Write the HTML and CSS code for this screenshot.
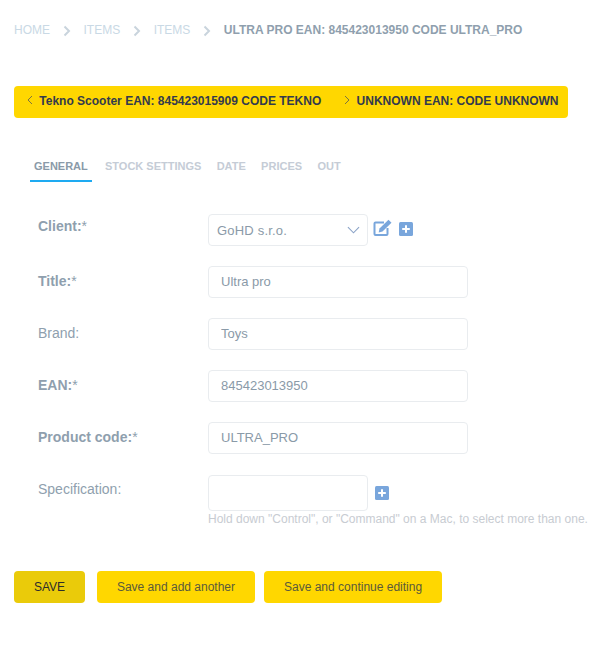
FILE: index.html
```html
<!DOCTYPE html>
<html lang="en">
<head>
    <meta charset="UTF-8">
    <meta name="viewport" content="width=device-width, initial-scale=1.0">
    <title>Ultra pro</title>
    <link rel="stylesheet" href="styles.css">
</head>
<body>
    <div class="breadcrumbs">
        <a href="#">Home</a>
        <svg class="crumb-sep" viewBox="0 0 8 12"><path d="M1.500 1.500 6 6l-4.500 4.500"/></svg>
        <a href="#">Items</a>
        <svg class="crumb-sep" viewBox="0 0 8 12"><path d="M1.500 1.500 6 6l-4.500 4.500"/></svg>
        <a href="#">Items</a>
        <svg class="crumb-sep" viewBox="0 0 8 12"><path d="M1.500 1.500 6 6l-4.500 4.500"/></svg>
        <span class="current">Ultra pro EAN: 845423013950 CODE ULTRA_PRO</span>
    </div>

    <div class="pager">
        <a href="#" class="pager-prev">
            <svg class="pager-arrow" viewBox="0 0 6 10"><path d="M5 1 1 5l4 4"/></svg>
            Tekno Scooter EAN: 845423015909 CODE TEKNO
        </a>
        <a href="#" class="pager-next">
            <svg class="pager-arrow" viewBox="0 0 6 10"><path d="M1 1l4 4-4 4"/></svg>
            UNKNOWN EAN: CODE UNKNOWN
        </a>
    </div>

    <ul class="tabs">
        <li class="tab active">General</li>
        <li class="tab">Stock settings</li>
        <li class="tab">Date</li>
        <li class="tab">Prices</li>
        <li class="tab">Out</li>
    </ul>

    <form class="form">
        <div class="row row-client">
            <label class="required">Client:<span>*</span></label>
            <div class="select-box">
                <span>GoHD s.r.o.</span>
                <svg class="select-arrow" viewBox="0 0 14 8"><path d="M1 1l6 6 6-6"/></svg>
            </div>
            <svg class="icon-edit" viewBox="0 0 20 18">
                <path class="edit-box" d="M11 3.500H2.500a1 1 0 0 0-1 1v10.500a1 1 0 0 0 1 1h11a1 1 0 0 0 1-1V9"/>
                <path class="edit-pen" d="M6.500 9.500 15.500 .8l3 2.900-9 8.800-3.800 .9z"/>
            </svg>
            <svg class="icon-add" viewBox="0 0 14 14">
                <rect width="14" height="14" rx="1.500"/>
                <path d="M7 3.200v7.600M3.200 7h7.600"/>
            </svg>
        </div>
        <div class="row">
            <label class="required">Title:<span>*</span></label>
            <input class="field" type="text" value="Ultra pro">
        </div>
        <div class="row">
            <label>Brand:</label>
            <input class="field" type="text" value="Toys">
        </div>
        <div class="row">
            <label class="required">EAN:<span>*</span></label>
            <input class="field" type="text" value="845423013950">
        </div>
        <div class="row">
            <label class="required">Product code:<span>*</span></label>
            <input class="field" type="text" value="ULTRA_PRO">
        </div>
        <div class="row row-multi">
            <label>Specification:</label>
            <div>
                <div class="multi-line">
                    <div class="multi-box"></div>
                    <svg class="icon-add" viewBox="0 0 14 14">
                        <rect width="14" height="14" rx="1.500"/>
                        <path d="M7 3.200v7.600M3.200 7h7.600"/>
                    </svg>
                </div>
                <p class="help">Hold down "Control", or "Command" on a Mac, to select more than one.</p>
            </div>
        </div>

        <div class="actions">
            <button type="button" class="btn btn-save">SAVE</button>
            <button type="button" class="btn btn-add">Save and add another</button>
            <button type="button" class="btn">Save and continue editing</button>
        </div>
    </form>
</body>
</html>
```

FILE: styles.css
```css
body {
    font-family: 'Liberation Sans', Arial, sans-serif;
    margin: 0;
    padding: 0 14px;
    background-color: #fff;
    color: #8a9aa8;
    font-size: 14px;
}

.breadcrumbs {
    display: flex;
    align-items: center;
    height: 16px;
    padding-top: 22px;
    font-size: 12px;
    text-transform: uppercase;
}

.breadcrumbs a {
    color: #c9d9e5;
    text-decoration: none;
}

.crumb-sep {
    width: 8px;
    height: 12px;
    margin: 2px 12.500px 0 13px;
    fill: none;
    stroke: #c9d4dd;
    stroke-width: 2;
}

.current {
    color: #8f9fae;
    font-weight: bold;
}

.pager {
    display: flex;
    align-items: center;
    width: 554px;
    height: 32px;
    padding-bottom: 1px;
    box-sizing: border-box;
    margin-top: 48px;
    background-color: #ffd700;
    border-radius: 4px;
    font-size: 12px;
    font-weight: bold;
}

.pager a {
    color: #333a4d;
    text-decoration: none;
    white-space: nowrap;
}

.pager-prev {
    margin-left: 13px;
}

.pager-next {
    margin-left: 23px;
}

.pager-arrow {
    width: 6px;
    height: 10px;
    margin: 0 3px 4px 0;
    vertical-align: middle;
    fill: none;
    stroke: #7b7440;
    stroke-width: 1;
}

.tabs {
    display: flex;
    list-style: none;
    margin: 34px 0 0 16px;
    padding: 0;
}

.tab {
    height: 30px;
    padding: 7px 4px 0 4px;
    margin-right: 7.300px;
    box-sizing: border-box;
    font-size: 11px;
    line-height: 14px;
    font-weight: bold;
    text-transform: uppercase;
    color: #c5ccd6;
}

.tab.active {
    width: 62px;
    padding-left: 4px;
    margin-right: 9px;
    color: #8a9aa8;
    border-bottom: 2px solid #1eaaf1;
}

.form {
    margin-top: 32px;
}

.row {
    display: flex;
    align-items: center;
    height: 32px;
    margin-bottom: 20px;
}

.row label {
    width: 170px;
    margin-left: 24px;
    margin-top: -2px;
    color: #8f9fae;
}

.row-client label {
    margin-top: -9px;
}

.row label.required {
    font-weight: bold;
}

.row label span {
    font-weight: normal;
}

.field {
    width: 260px;
    height: 32px;
    padding: 0 12px 2px;
    box-sizing: border-box;
    border: 1px solid #e9ecef;
    border-radius: 4px;
    font-family: inherit;
    font-size: 13px;
    color: #8a9aa8;
}

.select-box {
    display: flex;
    align-items: center;
    justify-content: space-between;
    width: 160px;
    height: 32px;
    padding: 0 7px 0 8px;
    box-sizing: border-box;
    border: 1px solid #e9ecef;
    border-radius: 4px;
    font-size: 13px;
    letter-spacing: 0.200px;
}

.select-arrow {
    width: 13px;
    height: 8px;
    fill: none;
    stroke: #8ba3c7;
    stroke-width: 1.200;
}

.icon-edit {
    width: 20px;
    height: 18px;
    margin: -5px 0 0 5px;
}

.edit-box {
    fill: none;
    stroke: #79a6dc;
    stroke-width: 2;
}

.edit-pen {
    fill: #79a6dc;
}

.icon-add {
    width: 14px;
    height: 14px;
    margin: -2px 0 0 6px;
}

.icon-add rect {
    fill: #79a6dc;
}

.icon-add path {
    stroke: #fff;
    stroke-width: 2;
}

.row-multi {
    align-items: flex-start;
    height: auto;
    margin-top: 21px;
    margin-bottom: 0;
}

.row-multi label {
    margin-top: 6px;
}

.multi-line {
    display: flex;
    align-items: center;
}

.multi-box {
    width: 160px;
    height: 36px;
    box-sizing: border-box;
    border: 1px solid #e9ecef;
    border-radius: 4px;
}

.multi-line .icon-add {
    margin: 0 0 0 7px;
}

.help {
    margin: 0;
    font-size: 12px;
    line-height: 16px;
    color: #c8ccd2;
    white-space: nowrap;
}

.actions {
    display: flex;
    margin-top: 44px;
}

.btn {
    height: 32px;
    padding: 0 20px;
    margin-right: 9px;
    border: none;
    border-radius: 4px;
    background-color: #ffd700;
    color: #5a5a3c;
    font-family: inherit;
    font-size: 12px;
    cursor: pointer;
}

.btn-save {
    width: 71px;
    padding: 0;
    margin-right: 12px;
    background-color: #eacb0a;
    color: #2c2c2c;
}

.btn-add {
    width: 158px;
    padding: 0;
}
```
